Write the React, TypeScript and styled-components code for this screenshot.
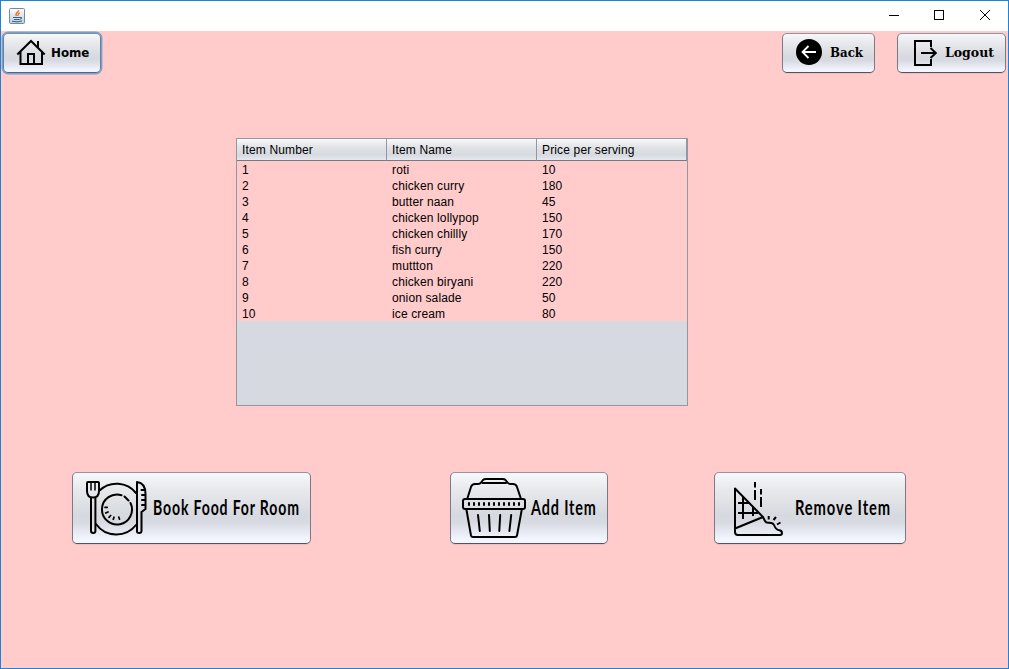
import React from "react";
import styled, { createGlobalStyle } from "styled-components";

const Global = createGlobalStyle`
  * { box-sizing: border-box; }
  body { margin: 0; font-family: "Liberation Sans", Arial, sans-serif; color: #000; }
`;

const Frame = styled.div`
  width: 1009px;
  height: 669px;
  border: 1px solid #1c83d8;
  background: #ffcbcb;
  display: flex;
  flex-direction: column;
  overflow: hidden;
`;

const TitleBar = styled.header`
  height: 30px;
  flex: none;
  background: #fff;
  display: flex;
  align-items: center;
  justify-content: space-between;
  padding: 0 17px 0 8px;
`;

const WindowControls = styled.div`
  display: flex;
  gap: 34px;
  svg { display: block; }
`;

const NavBar = styled.nav`
  flex: none;
  display: flex;
  align-items: flex-start;
  height: 107px;
  padding: 2px 2px 0;
`;

const Spacer = styled.div<{ $w?: number }>`
  flex: ${(p) => (p.$w ? `0 0 ${p.$w}px` : "1")};
`;

const Button = styled.button<{ $w: number; $h: number; $pad: number; $focus?: boolean }>`
  flex: none;
  width: ${(p) => p.$w}px;
  height: ${(p) => p.$h}px;
  padding: 0 0 0 ${(p) => p.$pad}px;
  display: flex;
  align-items: flex-start;
  border: 1px solid;
  border-color: ${(p) => (p.$focus ? "#7b8ba0 #6d7f96 #55657c #6d7f96" : "#92959d #777b84 #50545e #777b84")};
  border-radius: 5px;
  background: linear-gradient(#f7f8fa 0%, #e9eaed 22%, #d6d9df 60%, #d7dae1 70%, #f3f6ff 96%, #f3f6ff 100%);
  box-shadow: ${(p) => (p.$focus ? "0 0 0 1.4px #73a4d1" : "0 1px 0 #efbfc1")};
  color: #000;
  svg { display: block; flex: none; }
`;

const Label = styled.span<{ $left: number; $top: number; $size: number; $sx: number; $face: string; $ls?: number }>`
  display: block;
  margin: ${(p) => p.$top}px 0 0 ${(p) => p.$left}px;
  font: bold ${(p) => p.$size}px/20px ${(p) => p.$face};
  letter-spacing: ${(p) => p.$ls ?? 0}px;
  white-space: nowrap;
  transform: scaleX(${(p) => p.$sx});
  transform-origin: 0 50%;
`;

const ScrollPane = styled.section`
  flex: none;
  width: 452px;
  height: 268px;
  margin-left: 235px;
  border: 1px solid #9297a1;
  background: #d6d9df;
`;

const Table = styled.table`
  width: 450px;
  border-collapse: separate;
  border-spacing: 0;
  table-layout: fixed;
  font-size: 12px;
`;

const HeadCell = styled.th`
  height: 22px;
  padding: 0 0 0 5px;
  text-align: left;
  font-weight: normal;
  line-height: 20px;
  letter-spacing: 0.15px;
  background: linear-gradient(#f8f9fa 0%, #e3e5e8 35%, #d6d9df 75%, #e6e9f0 100%);
  border-bottom: 1px solid #747983;
  border-right: 1px solid #9297a1;
`;

const Cell = styled.td`
  height: 16px;
  padding: 2px 0 0 5px;
  line-height: 14px;
  letter-spacing: 0.13px;
  background: #ffcbcb;
`;

const Actions = styled.footer`
  display: flex;
  padding: 66px 0 0 71px;
`;

const stroke = { fill: "none", stroke: "#000", strokeWidth: 2, strokeLinecap: "round", strokeLinejoin: "round" } as const;

const JavaIcon = () => (
  <svg width="16" height="16" viewBox="0 0 16 16">
    <defs>
      <linearGradient id="tile" x1="0" y1="0" x2="0" y2="1">
        <stop offset="0" stopColor="#fdfdfd" />
        <stop offset="1" stopColor="#c3ccd6" />
      </linearGradient>
    </defs>
    <rect x=".5" y=".5" width="15" height="15" rx="1" fill="url(#tile)" stroke="#6f8aa3" />
    <path d="M9.6 2.2C9.8 4.4 5.4 4.8 7.4 8M10.8 4.6C8.4 5.6 8.8 6.3 9 8" fill="none" stroke="#e8762c" strokeWidth="1.4" />
    <path d="M4 9.5H11M5 11.5H10.6M3 13.2Q8 14.6 13 13M11 9.5Q13.4 9 12.4 10.6L10.8 11.4" fill="none" stroke="#31658f" />
  </svg>
);

const HomeIcon = () => (
  <svg width="30" height="40" viewBox="16 34 30 40" {...stroke} strokeLinecap="butt" strokeLinejoin="miter">
    <path d="M17.3 54.5L31 41L44.7 54.5M20.5 52V64H42V52M28 64V54H34V64M38 41V48" />
  </svg>
);

const BackIcon = () => (
  <svg width="26" height="38" viewBox="796 34 26 38">
    <circle cx="809" cy="52" r="13" />
    <path d="M816 52H803M808.5 46L802.5 52L808.5 58" fill="none" stroke="#fff" strokeWidth="1.8" />
  </svg>
);

const LogoutIcon = () => (
  <svg width="24" height="38" viewBox="914 34 24 38" {...stroke} strokeLinecap="butt" strokeLinejoin="miter">
    <path d="M931 47V41H915V65H931V59M921 53H935.5M930.5 48L935.8 53L930.5 58" />
  </svg>
);

const PlateIcon = () => (
  <svg width="62" height="70" viewBox="85 473 62 70" {...stroke}>
    <path d="M88 482Q87 482 87 483V491C87 495 89 497.5 93 497.5S99 495 99 491V483Q99 482 98 482Z" />
    <path d="M91 482V490M95 482V490" strokeWidth="1.5" />
    <path d="M91 498V531Q91 533 93.2 533T95.4 531V498" />
    <path d="M99.5 490.5A25 25 0 0 1 136 493M136 525A25 25 0 0 1 96 524" />
    <path d="M121.5 495.2A15 15 0 1 0 130.5 503M124.5 496.5L128.5 500.5" />
    <path d="M137 482Q145.5 483 145.5 494V509L141.5 512V531Q141.5 533 139.2 533T137 531ZM141.5 490H145M142 495H145M142 500H145M142 505H145" />
    <path d="M105 507.3H107.3M105.7 513L108 512M109 517.3L110.7 515.5M113.3 519.3L114 517.2M119.5 519.2L118.8 517" strokeWidth="1.7" />
  </svg>
);

const BasketIcon = () => (
  <svg width="66" height="70" viewBox="461 473 66 70" {...stroke}>
    <path d="M467.5 498L471 487Q472 484 475 484H478Q480 484 481 482.5L483 480Q484 479 486 479H502.5Q504.5 479 505.5 480L507.5 482.5Q508.5 484 510.5 484H513Q516 484 517 487L520.7 498M482.5 483H506" />
    <rect x="463" y="499" width="62" height="10" rx="2" />
    <path d="M466.5 510L471 535.5Q471.3 537 473 537H515Q516.7 537 517 535.5L521.7 510M478 515L479.8 531M489 515L489.8 531M500.2 515L499.3 531M511.2 515L509.4 531" />
    <path d="M468 504H520" strokeLinecap="butt" strokeWidth="3.4" strokeDasharray="2 3" />
  </svg>
);

const SliceIcon = () => (
  <svg width="52" height="70" viewBox="733 473 52 70" {...stroke} strokeLinecap="butt">
    <path d="M735 488.5L763 517L765 521Q766 523 769 522.7Q773 522.5 774 525Q776 530 779.5 530.3Q782 531 782 533Q782 535 780 535H738Q735 535 735 532ZM735 528.5L763 517" />
    <path d="M738 503H750M738 513H758M743 497V519M753 507V516M755 482V487.5M755 490V500M761 489V494.5M761 497V507M768.7 516V519.5M776 517L773.5 520M780.5 522.5L777 524.5" />
  </svg>
);

const serifFace = '"DejaVu Serif", serif';
const sansFace = '"DejaVu Sans", sans-serif';
const actionFace = 'Lato, "Liberation Sans", sans-serif';

const items = [
  ["roti", 10],
  ["chicken curry", 180],
  ["butter naan", 45],
  ["chicken lollypop", 150],
  ["chicken chillly", 170],
  ["fish curry", 150],
  ["muttton", 220],
  ["chicken biryani", 220],
  ["onion salade", 50],
  ["ice cream", 80],
];

export default function App() {
  return (
    <Frame>
      <Global />
      <TitleBar>
        <JavaIcon />
        <WindowControls>
          <svg width="12" height="12" viewBox="0 0 12 12"><path d="M2 5.5H12" stroke="#000" /></svg>
          <svg width="12" height="12" viewBox="0 0 12 12"><rect x="1.5" y=".5" width="9" height="9" fill="none" stroke="#000" /></svg>
          <svg width="12" height="12" viewBox="0 0 12 12"><path d="M1 0L11 10M11 0L1 10" stroke="#000" /></svg>
        </WindowControls>
      </TitleBar>
      <NavBar>
        <Button $w={98} $h={40} $pad={12} $focus>
          <HomeIcon />
          <Label $left={5} $top={9} $size={13} $sx={0.91} $face={sansFace}>Home</Label>
        </Button>
        <Spacer />
        <Button $w={93} $h={40} $pad={13}>
          <BackIcon />
          <Label $left={8} $top={9} $size={13} $sx={0.91} $face={serifFace}>Back</Label>
        </Button>
        <Spacer $w={22} />
        <Button $w={109} $h={40} $pad={16}>
          <LogoutIcon />
          <Label $left={7} $top={9} $size={13} $sx={0.96} $face={serifFace}>Logout</Label>
        </Button>
      </NavBar>
      <ScrollPane>
        <Table>
          <thead>
            <tr>
              <HeadCell>Item Number</HeadCell>
              <HeadCell>Item Name</HeadCell>
              <HeadCell>Price per serving</HeadCell>
            </tr>
          </thead>
          <tbody>
            {items.map(([name, price], i) => (
              <tr key={name}>
                <Cell>{i + 1}</Cell>
                <Cell>{name}</Cell>
                <Cell>{price}</Cell>
              </tr>
            ))}
          </tbody>
        </Table>
      </ScrollPane>
      <Actions>
        <Button $w={239} $h={72} $pad={12}>
          <PlateIcon />
          <Label $left={6} $top={24} $size={20} $sx={0.704} $face={actionFace} $ls={1.2}>Book Food For Room</Label>
        </Button>
        <Spacer $w={139} />
        <Button $w={158} $h={72} $pad={10}>
          <BasketIcon />
          <Label $left={4} $top={24} $size={20} $sx={0.72} $face={actionFace} $ls={1.2}>Add Item</Label>
        </Button>
        <Spacer $w={106} />
        <Button $w={192} $h={72} $pad={18}>
          <SliceIcon />
          <Label $left={10} $top={24} $size={20} $sx={0.737} $face={actionFace} $ls={1.2}>Remove Item</Label>
        </Button>
      </Actions>
    </Frame>
  );
}
